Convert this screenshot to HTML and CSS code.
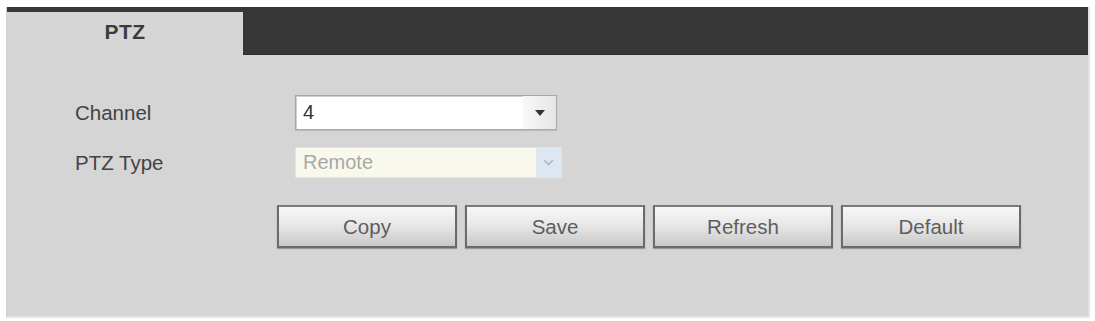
FILE: index.html
```html
<!DOCTYPE html>
<html>
<head>
<meta charset="utf-8">
<link rel="stylesheet" href="styles.css">
</head>
<body>
<div class="panel">
  <div class="tabs">
    <div class="tab">PTZ</div>
  </div>
  <div class="form">
    <div class="row row-channel">
      <div class="label">Channel</div>
      <div class="select select-active">
        <span class="value">4</span>
        <span class="arrow"><svg width="10" height="6" viewBox="0 0 10 6"><path d="M0 0 H10 L5 6 Z" fill="#333"/></svg></span>
      </div>
    </div>
    <div class="row row-type">
      <div class="label">PTZ Type</div>
      <div class="select select-disabled">
        <span class="value">Remote</span>
        <span class="arrow"><svg width="11" height="7" viewBox="0 0 11 7"><path d="M1 1 L5.5 5.5 L10 1" fill="none" stroke="#a9b8c8" stroke-width="1.6"/></svg></span>
      </div>
    </div>
    <div class="buttons">
      <div class="btn">Copy</div>
      <div class="btn">Save</div>
      <div class="btn">Refresh</div>
      <div class="btn">Default</div>
    </div>
  </div>
</div>
</body>
</html>
```
FILE: styles.css
```css
html, body {
  margin: 0;
  padding: 0;
  background: #ffffff;
}
body {
  font-family: "Liberation Sans", Arial, sans-serif;
  width: 1095px;
  height: 321px;
  overflow: hidden;
}
.panel {
  margin: 7px 0 0 6px;
  width: 1084px;
  height: 311px;
  background: #d5d5d5;
  box-sizing: border-box;
  border-right: 2px solid #e2e2e2;
  border-bottom: 2px solid #e6e6e6;
  border-left: 1px solid #cfcfcf;
}
.tabs {
  height: 48px;
  background: #373737;
  border-bottom: 1px solid #2e2e2e;
  box-sizing: border-box;
  display: flex;
  align-items: flex-end;
}
.tab {
  width: 236px;
  height: 43px;
  margin-bottom: -1px;
  background: #d6d6d6;
  display: flex;
  align-items: center;
  justify-content: center;
  font-weight: bold;
  font-size: 21px;
  color: #3c3c3c;
  letter-spacing: 0.5px;
  padding-bottom: 3px;
  box-sizing: border-box;
}
.form {
  padding: 40px 0 0 68px;
}
.row {
  display: flex;
  align-items: center;
}
.label {
  width: 220px;
  font-size: 20.5px;
  color: #434343;
}
.row-type {
  margin-top: 17px;
}
.select {
  display: flex;
  align-items: stretch;
  box-sizing: border-box;
}
.select .value {
  flex: 1;
  display: flex;
  align-items: center;
  padding-left: 7px;
  font-size: 20px;
}
.select .arrow {
  display: flex;
  align-items: center;
  justify-content: center;
}
.select-active {
  width: 262px;
  height: 35px;
  background: #ffffff;
  border: 1px solid #a8a8a8;
  box-shadow: inset 1px 1px 0 #d0d0d0, 0 1px 1px #bdbdbd;
}
.select-active .value {
  color: #333;
}
.select-active .arrow {
  width: 33px;
  background: linear-gradient(to right, #f8f8f8, #e6e6e6);
}
.select-disabled {
  width: 267px;
  height: 31px;
  background: #f8f8ec;
  border: 1px solid #e4e4dc;
}
.select-disabled .value {
  color: #a8a8a8;
}
.select-disabled .arrow {
  width: 25px;
  background: #dde7f1;
}
.buttons {
  display: flex;
  gap: 8px;
  margin-top: 27px;
  margin-left: 202px;
}
.btn {
  width: 180px;
  height: 43px;
  box-sizing: border-box;
  border: 2px solid #6b6b6b;
  border-top-color: #7a7a7a;
  background: linear-gradient(to bottom, #f7f7f7 0%, #e8e8e8 45%, #c9c9c9 100%);
  box-shadow: 0 1px 1px #9a9a9a;
  display: flex;
  align-items: center;
  justify-content: center;
  font-size: 20.5px;
  color: #5e5e5e;
}
```
